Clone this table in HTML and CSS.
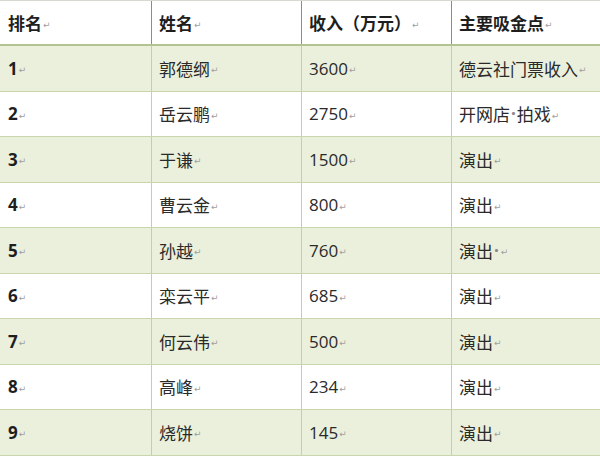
FILE: index.html
```html
<!DOCTYPE html>
<html lang="zh">
<head>
<meta charset="utf-8">
<link rel="stylesheet" href="styles.css">
</head>
<body>
<div class="table">
  <div class="row head">
    <div class="cell">排名<span class="pm">↵</span></div>
    <div class="cell">姓名<span class="pm">↵</span></div>
    <div class="cell">收入（万元）<span class="pm">↵</span></div>
    <div class="cell">主要吸金点<span class="pm">↵</span></div>
  </div>
  <div class="row alt">
    <div class="cell rank">1<span class="pm">↵</span></div>
    <div class="cell">郭德纲<span class="pm">↵</span></div>
    <div class="cell">3600<span class="pm">↵</span></div>
    <div class="cell">德云社门票收入<span class="pm">↵</span></div>
  </div>
  <div class="row">
    <div class="cell rank">2<span class="pm">↵</span></div>
    <div class="cell">岳云鹏<span class="pm">↵</span></div>
    <div class="cell">2750<span class="pm">↵</span></div>
    <div class="cell">开网店<span class="dot">·</span>拍戏<span class="pm">↵</span></div>
  </div>
  <div class="row alt">
    <div class="cell rank">3<span class="pm">↵</span></div>
    <div class="cell">于谦<span class="pm">↵</span></div>
    <div class="cell">1500<span class="pm">↵</span></div>
    <div class="cell">演出<span class="pm">↵</span></div>
  </div>
  <div class="row">
    <div class="cell rank">4<span class="pm">↵</span></div>
    <div class="cell">曹云金<span class="pm">↵</span></div>
    <div class="cell">800<span class="pm">↵</span></div>
    <div class="cell">演出<span class="pm">↵</span></div>
  </div>
  <div class="row alt">
    <div class="cell rank">5<span class="pm">↵</span></div>
    <div class="cell">孙越<span class="pm">↵</span></div>
    <div class="cell">760<span class="pm">↵</span></div>
    <div class="cell">演出<span class="dot">·</span><span class="pm">↵</span></div>
  </div>
  <div class="row">
    <div class="cell rank">6<span class="pm">↵</span></div>
    <div class="cell">栾云平<span class="pm">↵</span></div>
    <div class="cell">685<span class="pm">↵</span></div>
    <div class="cell">演出<span class="pm">↵</span></div>
  </div>
  <div class="row alt">
    <div class="cell rank">7<span class="pm">↵</span></div>
    <div class="cell">何云伟<span class="pm">↵</span></div>
    <div class="cell">500<span class="pm">↵</span></div>
    <div class="cell">演出<span class="pm">↵</span></div>
  </div>
  <div class="row">
    <div class="cell rank">8<span class="pm">↵</span></div>
    <div class="cell">高峰<span class="pm">↵</span></div>
    <div class="cell">234<span class="pm">↵</span></div>
    <div class="cell">演出<span class="pm">↵</span></div>
  </div>
  <div class="row alt">
    <div class="cell rank">9<span class="pm">↵</span></div>
    <div class="cell">烧饼<span class="pm">↵</span></div>
    <div class="cell">145<span class="pm">↵</span></div>
    <div class="cell">演出<span class="pm">↵</span></div>
  </div>
</div>
</body>
</html>
```

FILE: styles.css
```css
html, body {
  margin: 0;
  padding: 0;
  background: #ffffff;
}
body {
  font-family: "Open Sans", "Noto Sans CJK SC", sans-serif;
  font-size: 17px;
  color: #2a2a2a;
  width: 600px;
  height: 456px;
  overflow: hidden;
}
.table {
  display: flex;
  flex-direction: column;
  border-top: 1px solid #d6d9cf;
}
.row {
  display: grid;
  grid-template-columns: 151px 150px 150px 149px;
  height: 45.5px;
  box-sizing: border-box;
  border-bottom: 1px solid #c9d6ad;
  background: #ffffff;
}
.row.alt {
  background: #eaf0dc;
}
.row.head {
  height: 45px;
  border-bottom: 2px solid #b3c490;
  font-weight: 700;
  color: #1e1e1e;
}
.cell {
  display: flex;
  align-items: center;
  padding-left: 7px;
  box-sizing: border-box;
  border-left: 1px solid #c3cfa8;
  white-space: nowrap;
}
.cell:first-child {
  border-left: none;
  padding-left: 8px;
}
.head .cell {
  border-left-color: #8a8f84;
}
.rank {
  font-weight: 700;
  color: #1e1e1e;
}
.pm {
  font-family: "DejaVu Sans", sans-serif;
  font-size: 9px;
  font-weight: 400;
  color: #a0a0a0;
  margin-left: 1px;
  margin-top: 4px;
}
.dot {
  color: #888;
  font-weight: 700;
  margin: 0 1px;
}
```
